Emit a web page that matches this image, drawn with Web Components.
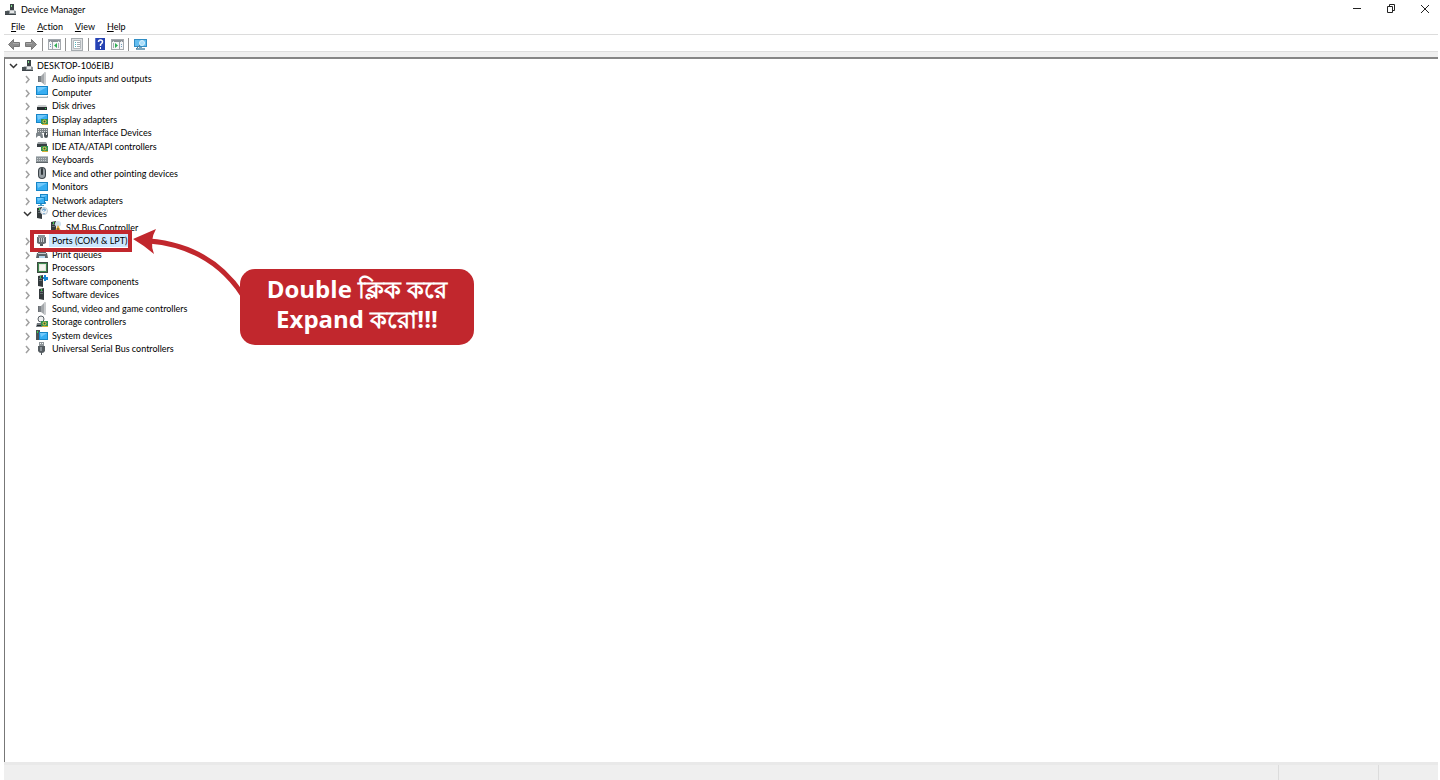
<!DOCTYPE html>
<html lang="en">
<head>
<meta charset="utf-8">
<title>Device Manager</title>
<style>
html, body { margin: 0; height: 100%; background: #fff; }
body { font: 9px/13px Lato, "Open Sans", sans-serif; color: #000; overflow: hidden; font-variant-ligatures: none; }
</style>
</head>
<body>
<dm-window>
  <dm-titlebar slot="top">Device Manager</dm-titlebar>
  <dm-menubar slot="top"></dm-menubar>
  <dm-toolbar slot="top"></dm-toolbar>
  <dm-tree>
    <dm-node level="0" icon="root" state="open">DESKTOP-106EIBJ</dm-node>
    <dm-node icon="speaker">Audio inputs and outputs</dm-node>
    <dm-node icon="computer">Computer</dm-node>
    <dm-node icon="disk">Disk drives</dm-node>
    <dm-node icon="display">Display adapters</dm-node>
    <dm-node icon="hid">Human Interface Devices</dm-node>
    <dm-node icon="ide">IDE ATA/ATAPI controllers</dm-node>
    <dm-node icon="keyboard">Keyboards</dm-node>
    <dm-node icon="mouse">Mice and other pointing devices</dm-node>
    <dm-node icon="monitor">Monitors</dm-node>
    <dm-node icon="network">Network adapters</dm-node>
    <dm-node icon="other" state="open">Other devices</dm-node>
    <dm-node level="2" icon="warning" state="leaf">SM Bus Controller</dm-node>
    <dm-node icon="port" selected>Ports (COM &amp; LPT)</dm-node>
    <dm-node icon="printer">Print queues</dm-node>
    <dm-node icon="cpu">Processors</dm-node>
    <dm-node icon="component">Software components</dm-node>
    <dm-node icon="software">Software devices</dm-node>
    <dm-node icon="speaker">Sound, video and game controllers</dm-node>
    <dm-node icon="storage">Storage controllers</dm-node>
    <dm-node icon="system">System devices</dm-node>
    <dm-node icon="usb">Universal Serial Bus controllers</dm-node>
    <dm-callout slot="overlay">Double ক্লিক করে<br>Expand করো!!!</dm-callout>
  </dm-tree>
  <dm-statusbar slot="bottom"></dm-statusbar>
</dm-window>

<script>
const tower = '<path fill="#343a3d" d="M1 1l5-1v12l-5-1z"/><path fill="#687174" d="M2 3h3v1H2zM2 5h3v1H2z"/><path fill="#35d34a" d="M3 1h1v2H3z"/>';
const speaker = '<path fill="#7d8287" d="M2 4h3v6H2z"/><path fill="#a3a7aa" d="M5 4l4-4v13l-4-3z"/><path fill="#c9cbcd" d="M8 1l2-1v13l-2-1z"/><path fill="#6a6f74" d="M2 4h1v6H2z"/>';
const screen = (x, y, w, h) => `<rect x="${x}" y="${y}" width="${w}" height="${h}" fill="#1685c7"/><rect x="${x + 1}" y="${y + 1}" width="${w - 2}" height="${h - 2}" fill="#37aef2"/><path fill="#72c9fb" d="M${x + 1} ${y + 1}h${w - 2}l-${w - 3} ${h - 4}z"/>`;
const board = '<path fill="#2f9152" d="M5 6h7v5H5z"/><path fill="#d9b538" d="M6 11h6v1H6z"/><circle cx="8.500" cy="8.500" r="2" fill="#d3c84e"/><circle cx="8.500" cy="8.500" r="1" fill="#245f39"/>';
const drive = '<path fill="#c9cccd" d="M2 6h8l1 2H1z"/><path fill="#272e31" d="M1 8h10v3H1z"/><path fill="#31c84b" d="M9 9h1v1H9z"/>';
const windowFrame = '<rect x=".5" y="1.500" width="12" height="10" fill="#f5f6f7" stroke="#a4a9ae"/><path fill="#8c9298" d="M1 2h11v2H1z"/><path fill="#dce1e4" d="M2 3h1v1H2zM10 3h1v1h-1z"/>';
const ICONS = {
  root: '<path fill="#3c4347" d="M5 1h4v6H5z"/><path fill="#81e08b" d="M6 2h1v2H6z"/><path fill="#bfc3c5" d="M2 7h8l1 2H1z"/><path fill="#4b5357" d="M0 8h4v3H0z"/><path fill="#8d9498" d="M4 8h7v3H4z"/><path fill="#e6e8e9" d="M5 8h4v2H5z"/><path fill="#3c4347" d="M0 11h11v1H0z"/>',
  speaker,
  computer: screen(0, 0, 12, 9) + '<path fill="#a4b4bd" d="M0 10h12v2H0z"/><path fill="#e6edf0" d="M1 10h10v1H1z"/>',
  monitor: screen(0, 2, 12, 9),
  disk: drive,
  display: screen(0, 1, 12, 9) + board,
  hid: '<path fill="#7b8286" d="M1 2h11v5H1z"/><path stroke="#d5d8da" stroke-dasharray="1 1" d="M2 3.500h9M2 5.500h9"/><path fill="#7d858a" d="M0 12V8q0-2 2-1h3q2 0 2 5H5L4 10H2z"/><rect x="8" y="6" width="4" height="6" rx="2" fill="#4c5358"/><path fill="#eee" d="M10 7h1v2h-1z"/>',
  ide: '<path fill="#979ea1" d="M2 2h8l1 2H1z"/><path fill="#373f43" d="M1 4h10v3H1z"/>' + board,
  keyboard: '<rect y="3" width="12" height="7" fill="#8b9397"/><path fill="#b9c0c4" d="M0 3h12v1H0z"/><path stroke="#c6ccd0" stroke-dasharray="1 1" d="M1 5.500h10M1 7.500h10"/><path fill="#5d656a" d="M0 9h12v1H0z"/>',
  mouse: '<rect x="2" y="0" width="8" height="12" rx="4" fill="#3c4449"/><rect x="3" y="1" width="6" height="10" rx="3" fill="#98a0a5"/><rect x="5" y="1" width="2" height="7" rx="1" fill="#30373b"/>',
  network: screen(4, 0, 8, 7) + screen(0, 3, 9, 7) + '<path fill="#4a9bc7" d="M4 10h2v1h2v1H2v-1h2zM9 8h1v2H9z"/>',
  other: tower + '<circle cx="8" cy="4" r="3.500" fill="#eff4f7" stroke="#bac5ce"/><path fill="none" stroke="#3281bd" d="M6.500 3.500q0-1.500 1.500-1.500T9.500 3L8 4.500"/><path fill="#3281bd" d="M7.500 6h1v1h-1z"/>',
  warning: tower + '<circle cx="8" cy="3" r="3" fill="#cfe2ee"/><path fill="#dfa52f" d="M8 4l4 8H4z"/><path fill="#333" d="M7.500 7h1v3h-1zM7.500 11h1v1h-1z"/>',
  port: '<path fill="#666c70" d="M1 3h9v6L8 10H3L1 9z"/><path fill="#8c9296" d="M2 1h7v3H2z"/><path stroke="#c3cace" d="M3.500 4v4M5.500 4v4M7.500 4v4"/><path fill="#555c60" d="M4 10h3v2H4z"/>',
  printer: '<path fill="#5e666b" d="M2 1h8v4H2z"/><path fill="#e4e9ec" d="M3 1h6v3H3z"/><path fill="#5c6469" d="M1 5h10l1 5H0z"/><path fill="#c4cacd" d="M2 5h8v1H2z"/><path fill="#b5d7ee" d="M3 8h6v2H3z"/>',
  cpu: '<rect x="1" y="1" width="11" height="11" fill="#3b4b40"/><rect x="2" y="2" width="9" height="9" fill="#3f8a50"/><rect x="3" y="3" width="7" height="7" fill="#e3e6dc"/><path fill="#f5f5ef" d="M4 4h5v5H4z"/>',
  component: '<g transform="translate(1 0)">' + tower + '</g><path fill="#1787d4" d="M8 0h2v2h2v3h-2v1H8V4H7V2h1z"/>',
  software: '<g transform="translate(2 0)">' + tower + '</g>',
  storage: '<circle cx="5" cy="4" r="3" fill="#f0f1f1" stroke="#596066"/><path fill="#737b80" d="M1 8h9l2 4H0z"/><path fill="#23292c" d="M1 10h9v1H1z"/>' + board,
  system: '<path fill="#4b5357" d="M0 1h4v10H0z"/><path fill="#35d34a" d="M1 2h1v2H1z"/>' + screen(3, 3, 9, 8),
  usb: '<path fill="#8d9498" d="M3 0h5v4H3z"/><path fill="#f3f4f4" d="M4 1h1v1H4zM6 1h1v1H6z"/><path fill="#555c61" d="M2 4h7v5Q8 11 6 11v2H5v-2Q3 11 2 9z"/><path fill="#899197" d="M4 5h2v4H4z"/>',
  back: '<path fill="#8d8d8d" stroke="#787878" d="M.5 6.500L5.500 1.500v3H11.500v4H5.500v3z"/><path fill="#aaa" d="M5 5h6v1H5z"/>',
  forward: '<path fill="#8d8d8d" stroke="#787878" d="M11.500 6.500L6.500 1.500v3H.5v4h6v3z"/><path fill="#aaa" d="M1 5h6v1H1z"/>',
  console: windowFrame + '<path stroke="#9da3a8" d="M4.500 4v7"/><path fill="#6d9bc0" d="M2 6h1v1H2zM2 8h1v1H2z"/><path fill="#2cad51" d="M9 5v5L6 7.500z"/><path fill="#a6adb2" d="M10 5h1v5h-1z"/>',
  panel: windowFrame + '<path stroke="#9da3a8" d="M8.500 4v7"/><path fill="#6d9bc0" d="M10 6h1v1h-1zM10 8h1v1h-1z"/><path fill="#2cad51" d="M4 5v5l3-2.500z"/><path fill="#a6adb2" d="M2 5h1v5H2z"/>',
  properties: '<rect x=".5" y=".5" width="11" height="12" fill="#e0e2e4" stroke="#a6acb0"/><path fill="#fff" stroke="#b3b8bc" d="M2.500 2.500h7v8h-7z"/><path fill="#4bb6bd" d="M4 4h1v1H4zM4 6h1v1H4zM4 8h1v1H4z"/><path fill="#a4abb0" d="M6 4h3v1H6zM6 6h3v1H6zM6 8h3v1H6z"/>',
  help: '<rect x="1" y="0" width="10" height="12" fill="#2743b3"/><path fill="#5c73d1" d="M1 0h1v12H1z"/><path fill="none" stroke="#fff" stroke-width="1.500" d="M4.500 4q0-2 2-2t2 2q0 1-2 2.500V8"/><path fill="#fff" d="M6 9h1v2H6z"/>',
  scan: '<rect y="1" width="13" height="8" fill="#318dc4"/><rect x="1" y="2" width="11" height="6" fill="#63bdef"/><path fill="#7aa5bd" d="M5 9h3v1h3v2H2v-2h3z"/><circle cx="8" cy="5" r="2.500" fill="#a9ddfa" stroke="#d9f1fc"/><path stroke="#587b91" d="M6 7L2 11"/>',
  minimize: '<path stroke="#222" d="M3 7.500h8"/>',
  restore: '<path fill="none" stroke="#222" d="M3.500 5.500h5v6h-5zM5.500 5V3.500h5v6H9"/>',
  close: '<path fill="none" stroke="#222" d="M3 4l8 8M11 4l-8 8"/>'
};

function define(name, css, html, connect) {
  customElements.define(name, class extends HTMLElement {
    constructor() { super(); this.attachShadow({ mode: 'open' }); }
    connectedCallback() {
      this.shadowRoot.innerHTML = `<style>:host,*{box-sizing:border-box}button{font:inherit;color:inherit;border:0;background:none;padding:0;display:block}${css}</style>${typeof html === 'function' ? html(this) : html}`;
      if (connect) connect(this);
    }
  });
}

define('dm-icon', ':host{display:block;width:13px;height:13px;flex:none}svg{display:block;width:100%;height:100%}',
  el => `<svg viewBox="0 0 ${el.getAttribute('size') || 13} ${el.getAttribute('size') || 13}" aria-hidden="true">${ICONS[el.getAttribute('name')] || ''}</svg>`);

define('dm-window', ':host{display:flex;flex-direction:column;height:100vh}main{flex:1;min-height:0;display:flex;margin:0 2px 0 4px}',
  '<slot name="top"></slot><main><slot></slot></main><slot name="bottom"></slot>');

define('dm-titlebar', `:host{display:flex;align-items:center;gap:3px;height:19px;padding:0 8px 0 5px;flex:none}
  h1{font:inherit;margin:0;flex:1}nav{display:flex;gap:20px}nav dm-icon{width:14px;height:14px}nav button{margin-bottom:3px}`,
  `<dm-icon name="root"></dm-icon><h1><slot></slot></h1><nav aria-label="Window">${['minimize', 'restore', 'close'].map(n => `<button aria-label="${n}"><dm-icon name="${n}" size="14"></dm-icon></button>`).join('')}</nav>`);

define('dm-menubar', ':host{display:flex;align-items:center;gap:12px;height:15px;padding-left:11px;flex:none}',
  ['File', 'Action', 'View', 'Help'].map(t => `<button><u>${t[0]}</u>${t.slice(1)}</button>`).join(''));

define('dm-toolbar', `:host{display:flex;align-items:center;gap:4px;height:23px;margin:0 2px 0 4px;padding:3px 0 6px 4px;flex:none;
  border-top:1px solid #dcdcdc;background:linear-gradient(to top,#efefef 5px,#dedede 5px,#dedede 6px,#fff 6px)}
  i{width:1px;height:13px;background:#929292;margin-right:1px}`,
  ['back', 'forward', '', 'console', '', 'properties', '', 'help', 'panel', '', 'scan'].map(n => n ? `<button aria-label="${n}"><dm-icon name="${n}"></dm-icon></button>` : '<i></i>').join(''));

/* Rows alternate between 13px and 14px, starting with two 13px rows. */
define('dm-tree', `:host{display:block;flex:1;position:relative;border-top:2px solid #858585;border-left:1px solid #777;background:#fff}
  ::slotted(dm-node){height:13px}::slotted(dm-node:nth-child(2n+3)){height:14px}`,
  '<div role="tree"><slot></slot></div><slot name="overlay"></slot>');

define('dm-node', `:host{display:flex;align-items:center;padding-left:17px}
  :host([level="0"]){padding-left:3px}:host([level="2"]){padding-left:31px}
  button{width:11px;height:11px;margin-right:3px}svg{display:block;fill:none;stroke:#a0a0a0;stroke-width:1.500}
  :host([state="open"]) svg{stroke:#333}
  span{padding:0 1px 0 3px;white-space:nowrap}:host([level="0"]) span{padding-left:2px}:host([selected]) span{background:#cce8ff}`,
  el => {
    const state = el.getAttribute('state');
    const path = state === 'open' ? 'M2 4l3.500 3.500L9 4' : 'M4 3l3 3.500L4 10';
    return `<button aria-label="Toggle">${state === 'leaf' ? '' : `<svg width="11" height="11" viewBox="0 0 11 11"><path d="${path}"/></svg>`}</button><dm-icon name="${el.getAttribute('icon')}"></dm-icon><span><slot></slot></span>`;
  }, el => el.setAttribute('role', 'treeitem'));

define('dm-callout', `:host{position:absolute;left:25px;top:169px;width:444px;height:117px}
  svg{position:absolute;inset:0;overflow:visible}
  p{position:absolute;left:210px;top:41px;width:234px;height:76px;margin:0;padding:5px 0 11px;border-radius:15px;background:#c1272d;color:#fff;
  text-align:center;font:bold 24px/30px "Open Sans","Noto Sans",sans-serif;white-space:nowrap}`,
  `<svg width="444" height="117" viewBox="30 228 444 117" aria-hidden="true"><path fill="none" stroke="#c1272d" stroke-width="4" d="M32 232h98v18H32z"/>
  <path fill="none" stroke="#c1272d" stroke-width="5" d="M149 241Q210 246 242 294"/><path fill="#c1272d" d="M133 239L156 229Q149 241 154 254Q145 246 133 239z"/></svg><p><slot></slot></p>`);

define('dm-statusbar', `:host{display:flex;height:18px;margin:0 2px 0 4px;flex:none;background:#efefef;border-top:3px solid #e9e9e9}
  div{flex:1}span{border-left:1px solid #dcdcdc;width:100px}span:last-child{width:60px}`,
  '<div></div><span></span><span></span>');
</script>
</body>
</html>
